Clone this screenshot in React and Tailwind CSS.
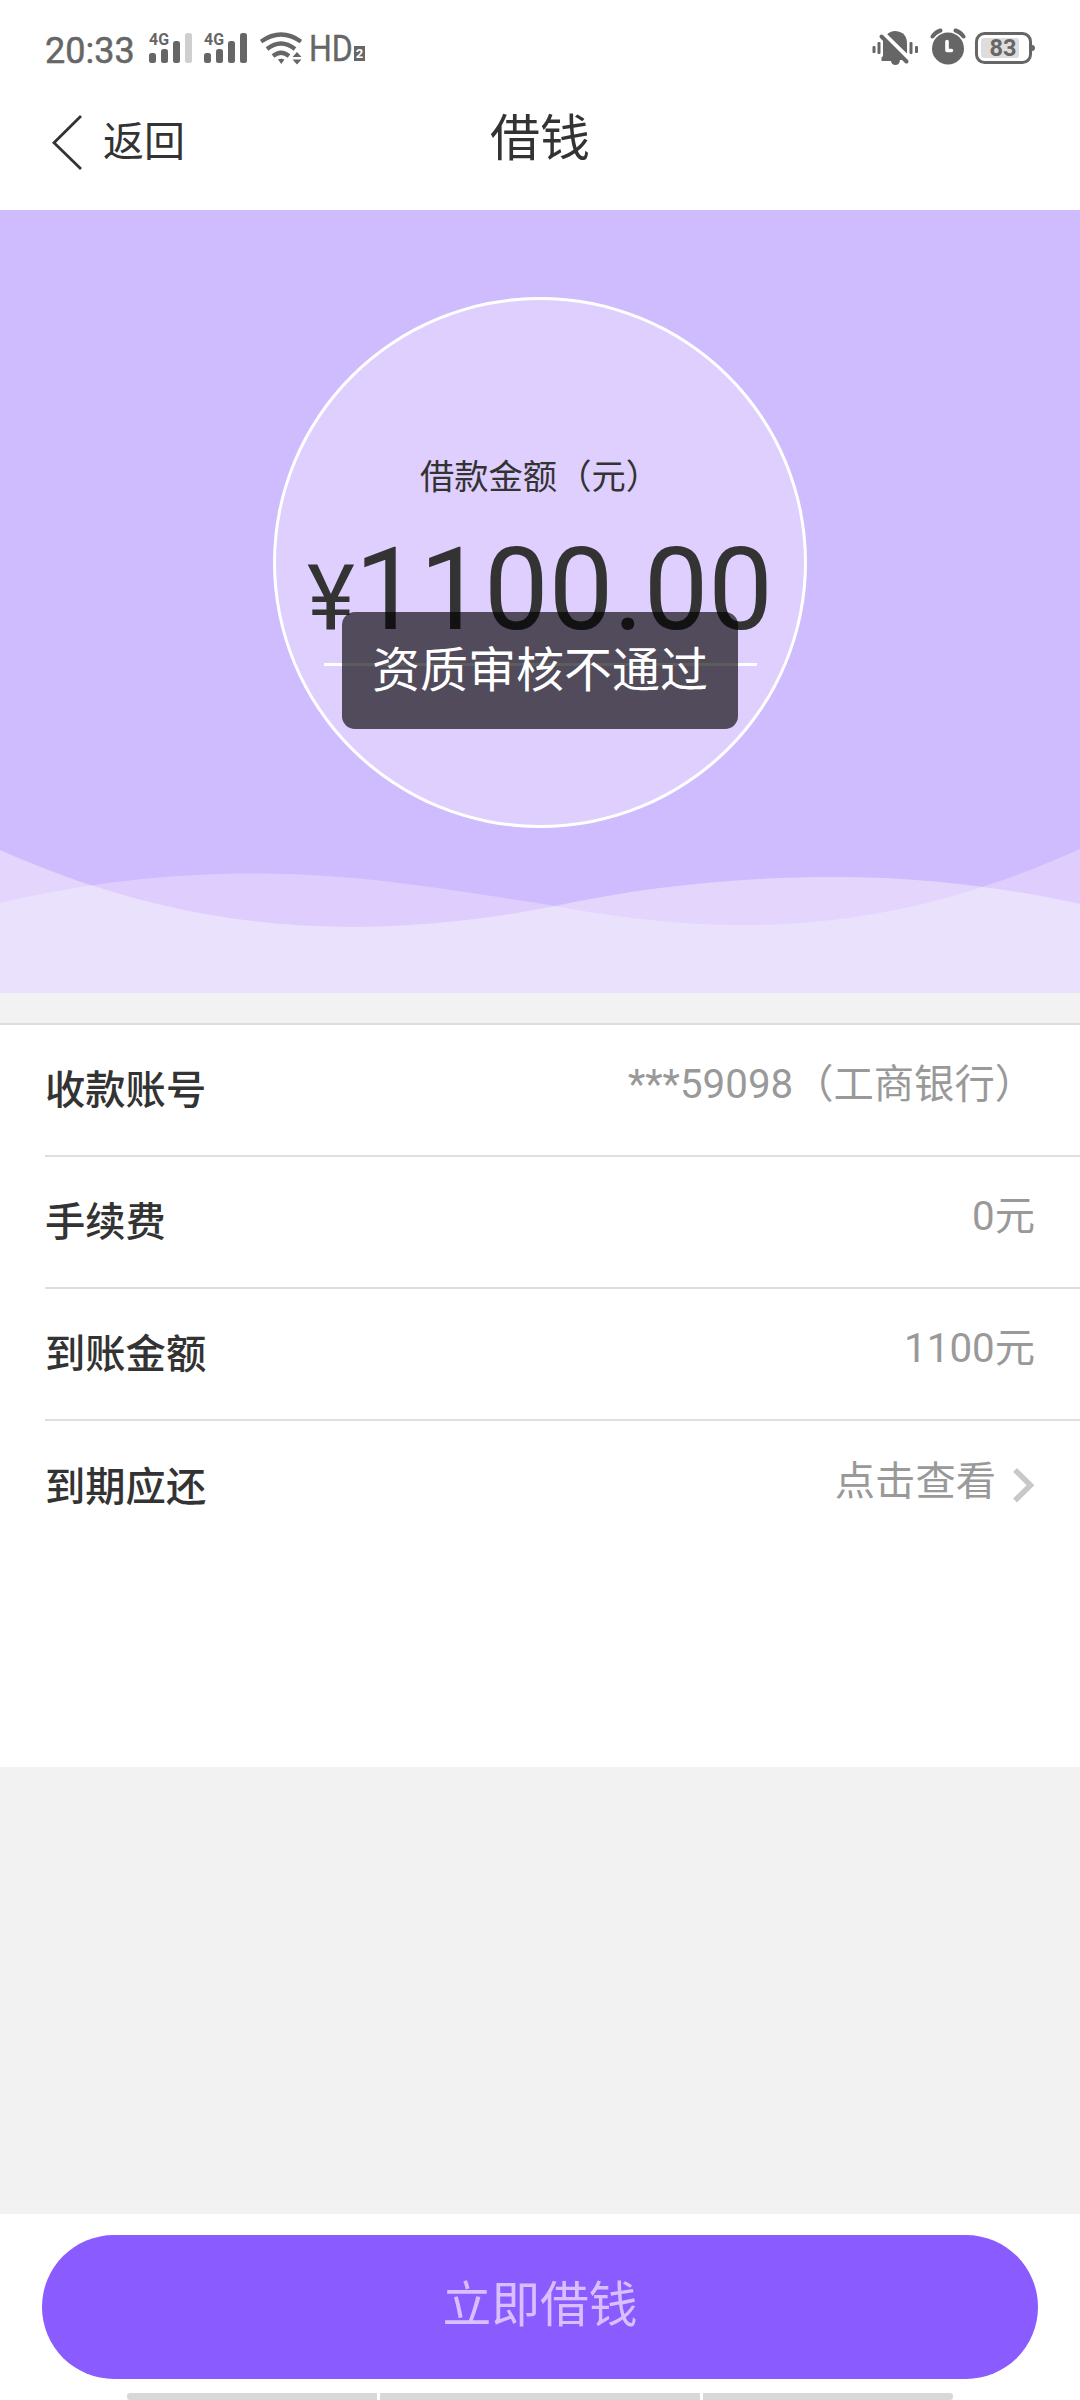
const GREY = "#666666";

function Signal({ weak, className }) {
  return (
    <svg className={className} width="44" height="34" viewBox="0 -2 44 34" fill={GREY}>
      <text x="0" y="13" fontSize="17" fontWeight="700" textLength="20" lengthAdjust="spacingAndGlyphs">4G</text>
      <rect x="0" y="21" width="7" height="10" rx="2.5" />
      <rect x="12" y="17" width="7" height="14" rx="2.5" />
      <rect x="24" y="9" width="7" height="22" rx="2.5" />
      <rect x="36" y="1" width="7" height="30" rx="2.5" fill={weak ? "#cfcfcf" : GREY} />
    </svg>
  );
}

function Wifi({ className }) {
  return (
    <svg className={className} width="42" height="34" viewBox="0 0 42 34" fill="none" stroke={GREY} strokeWidth="4.2">
      <path d="M1 10.5 Q21 -3.5 41 10.5" />
      <path d="M7 18 Q21 7 35 18" />
      <path d="M13 25 Q21 18.5 29 25" />
      <path d="M18 28.5 Q21 27 24.5 28.5 L21.3 33 Z" fill={GREY} stroke="none" />
      <path d="M32.5 26 L37 21 L41.5 26 Z M32.5 28.5 H41.5 L37 33.5 Z" fill={GREY} stroke="none" />
    </svg>
  );
}

function MutedBell({ className }) {
  return (
    <svg className={className} width="48" height="36" viewBox="0 0 48 36" fill={GREY}>
      <rect x="0.5" y="16" width="3" height="7" rx="1" />
      <rect x="5.5" y="12" width="3" height="12" rx="1" />
      <rect x="37.5" y="12" width="3" height="12" rx="1" />
      <rect x="43" y="16" width="3" height="7" rx="1" />
      <path d="M15 4.5 Q18 1 23.5 1 Q35 2 35 14 V24 Z" />
      <path d="M11 8.5 L32 30 H28 Q27.5 35 23.5 35 Q19.5 35 19 31 H9.5 V27.5 L11 26 Z" />
      <path d="M9.5 6.5 L34.5 31.5" stroke={GREY} strokeWidth="4" strokeLinecap="round" />
      <path d="M12.5 3.5 L37 27.5" stroke="#fff" strokeWidth="2.5" />
    </svg>
  );
}

function Alarm({ className }) {
  return (
    <svg className={className} width="36" height="37" viewBox="0 0 36 37" fill="none">
      <circle cx="18" cy="20.5" r="16" fill={GREY} />
      <path d="M2.5 8.5 Q5.5 4 10.5 2.5 M25.5 2.5 Q30.5 4 33.5 8.5" stroke={GREY} strokeWidth="4" strokeLinecap="round" />
      <path d="M17 13.5 V22.5 H21.5" stroke="#fff" strokeWidth="3.6" strokeLinecap="round" strokeLinejoin="round" />
    </svg>
  );
}

function Battery({ className }) {
  return (
    <svg className={className} width="61" height="32" viewBox="0 0 61 32" fill="none">
      <rect x="1.5" y="1.5" width="54" height="29" rx="8" stroke={GREY} strokeWidth="3" />
      <path d="M57 13 Q60 13 60 16 Q60 19 57 19 Z" fill={GREY} />
      <rect x="6" y="6" width="38" height="20" rx="3" fill="#dddddd" />
      <text x="14.5" y="24" fontSize="24" fontWeight="700" fill={GREY} textLength="27" lengthAdjust="spacingAndGlyphs">83</text>
    </svg>
  );
}

function StatusBar() {
  return (
    <div className="flex h-[96px] items-start text-[36px] leading-[42px] text-[#666666]">
      <span className="ml-[45px] mt-[30px] w-[104px] [-webkit-text-stroke:0.5px_#666666]">20:33</span>
      <Signal weak className="mt-[30px]" />
      <Signal className="ml-[11px] mt-[30px]" />
      <Wifi className="ml-[12px] mt-[31px]" />
      <span className="ml-[7px] mt-[28px] w-[45px] origin-left scale-x-[0.89] [-webkit-text-stroke:0.4px_#666666]">HD</span>
      <span className="mt-[46px] flex h-[15px] w-[11px] items-center justify-center bg-[#666666] text-[13px] font-bold leading-none text-white">2</span>
      <MutedBell className="ml-auto mt-[30px]" />
      <Alarm className="ml-[10px] mt-[28px]" />
      <Battery className="ml-[9px] mr-[44px] mt-[32px]" />
    </div>
  );
}

function NavBar() {
  return (
    <div className="relative h-[114px]">
      <h1 className="pt-[13px] text-center text-[50px] font-normal leading-[60px]">借钱</h1>
      <button className="absolute left-[50px] top-[18px] flex items-center gap-[20px] text-[41px] leading-[56px]">
        <svg width="33" height="56" viewBox="0 0 33 56" fill="none" stroke="#333" strokeWidth="2.8">
          <path d="M31 2 L4 28.8 L31 55" />
        </svg>
        <span>返回</span>
      </button>
    </div>
  );
}

const WAVE_BACK =
  "M0 903 C80 884 165 873.5 255 873.5 C360 873.5 450 890 540 903.5 C610 916 670 925 743 925 C870 925 975 896 1080 849 V993 H0 Z";
const WAVE_FRONT =
  "M0 850 C110 899 225 927 351 927 C430 927 500 917 555 906 C640 888 730 877 836 877 C930 877 1010 889 1080 904 V993 H0 Z";

function Hero() {
  return (
    <section className="relative flex h-[783px] justify-center bg-[#cfbcfe] pt-[87px]">
      <svg className="absolute inset-x-0 bottom-0" width="1080" height="144" viewBox="0 849 1080 144">
        <clipPath id="swell">
          <path d={WAVE_BACK} />
        </clipPath>
        <path d={WAVE_BACK} fill="#dfcefd" />
        <path d={WAVE_FRONT} fill="#e4d5fc" />
        <path d={WAVE_FRONT} fill="#eae1fd" clipPath="url(#swell)" />
      </svg>
      <div className="relative flex h-[531px] w-[534px] flex-col items-center rounded-[50%] border-[3px] border-white bg-[#dfcffe]">
        <p className="mt-[156px] whitespace-nowrap text-[34.3px] leading-[42px]">借款金额（元）</p>
        <p className="mt-[25px] whitespace-nowrap text-[115px] leading-[134px]">
          <span className="text-[91px]">¥</span>1100.00
        </p>
        <div className="absolute left-[48px] top-[363px] h-[3px] w-[433px] bg-white" />
      </div>
      <div
        role="alert"
        className="absolute left-[342px] top-[402px] flex h-[117px] w-[396px] justify-center rounded-[13px] bg-black/64 pt-[29px] text-[48px] leading-[60px] text-white"
      >
        资质审核不通过
      </div>
    </section>
  );
}

function Row({ label, children, last }) {
  return (
    <div className={last ? "flex h-[132px] items-center pr-[45px]" : "flex h-[132px] items-center border-b-2 border-[#dedede] pr-[45px]"}>
      <span className="flex-1 pt-[2px] font-medium">{label}</span>
      <span className="flex items-center pb-[10px] text-[#999999]">{children}</span>
    </div>
  );
}

export default function App() {
  return (
    <main
      lang="zh-CN"
      className="flex h-[2400px] w-[1080px] flex-col overflow-hidden bg-[#f2f2f2] font-[Roboto,'Noto_Sans_CJK_SC',sans-serif] text-[#333333]"
    >
      <header className="h-[210px] bg-white">
        <StatusBar />
        <NavBar />
      </header>
      <Hero />
      <section className="mt-[30px] h-[744px] border-t-2 border-[#dddddd] bg-white pl-[45px] text-[40.3px] leading-[60px]">
        <Row label="收款账号">***59098（工商银行）</Row>
        <Row label="手续费">0元</Row>
        <Row label="到账金额">1100元</Row>
        <Row label="到期应还" last>
          点击查看
          <svg className="relative top-[3px] ml-[17px]" width="22" height="36" viewBox="0 0 22 36" fill="none" stroke="#c8c8c8" strokeWidth="5.5">
            <path d="M2 3 L17.5 18.3 L2 33.5" />
          </svg>
        </Row>
      </section>
      <footer className="mt-auto flex h-[186px] flex-col items-center bg-white pt-[21px]">
        <button className="h-[144px] w-[996px] shrink-0 rounded-full bg-[#8a5bff] pb-[2px] text-[48.8px] text-[#d8bfff]">立即借钱</button>
        <div className="mt-[14px] flex h-[7px] gap-[3px]">
          <div className="w-[250px] rounded-l-[3px] bg-[#d8d8d8]" />
          <div className="w-[320px] bg-[#d8d8d8]" />
          <div className="w-[250px] rounded-r-[3px] bg-[#d8d8d8]" />
        </div>
      </footer>
    </main>
  );
}
